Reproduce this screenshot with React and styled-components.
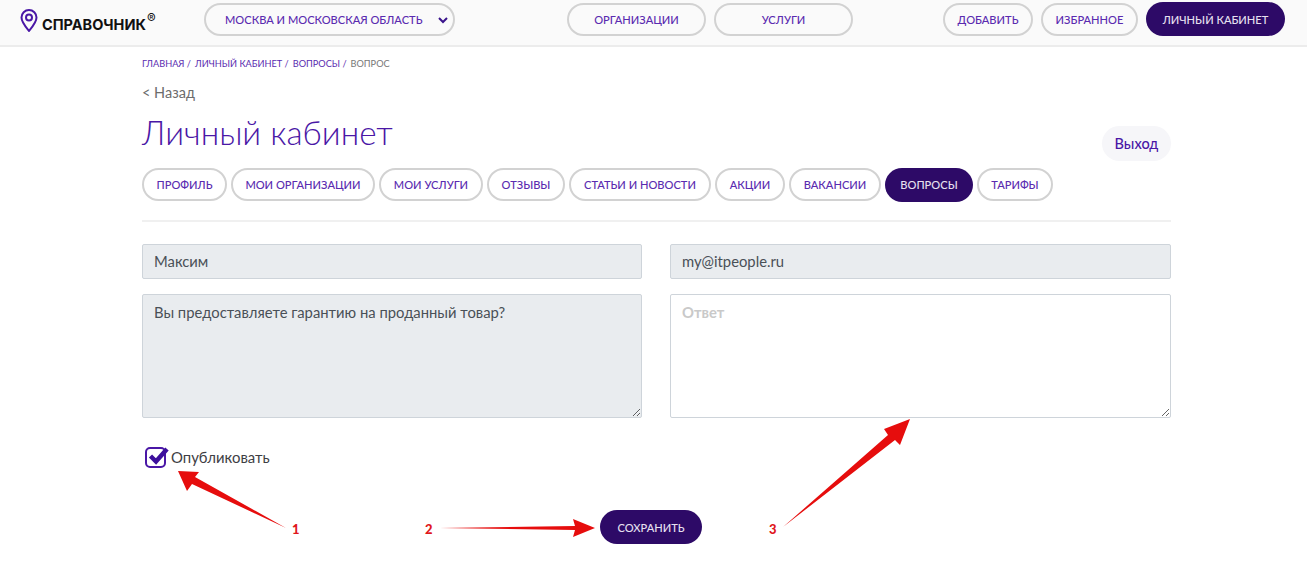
import React from 'react';
import styled, { createGlobalStyle } from 'styled-components';

const GlobalStyle = createGlobalStyle`
  html, body {
    margin: 0;
    padding: 0;
    background: #ffffff;
  }
  body {
    font-family: 'Lato', 'Liberation Sans', sans-serif;
    color: #333;
  }
  * {
    box-sizing: border-box;
  }
`;

const Page = styled.div`
  position: relative;
  width: 1307px;
  height: 582px;
  overflow: hidden;
`;

const Header = styled.header`
  display: flex;
  align-items: center;
  height: 47px;
  padding: 0 22px 7px 20px;
  background: #fafafa;
  border-bottom: 2px solid #ececec;
`;

const Logo = styled.div`
  display: flex;
  align-items: center;
  width: 184px;
  gap: 4px;
  margin-top: 2px;
`;

const LogoText = styled.span`
  font-family: 'Inter', sans-serif;
  font-size: 14.5px;
  font-weight: 700;
  letter-spacing: 0;
  color: #111;
  margin-top: 3px;
`;

const Registered = styled.span`
  font-size: 13px;
  font-weight: 400;
  vertical-align: 7px;
  margin-left: 1px;
`;

const Group = styled.div`
  display: flex;
  align-items: center;
  gap: 8px;
  margin-left: ${(p) => p.$offset || 0}px;
`;

const Pill = styled.a`
  display: flex;
  align-items: center;
  justify-content: center;
  flex: none;
  width: ${(p) => p.$width}px;
  height: ${(p) => (p.$dark ? 34 : 33)}px;
  border-radius: 17px;
  border: ${(p) => (p.$dark ? 'none' : '2px solid #d2d2d2')};
  background: ${(p) => (p.$dark ? '#2d0a67' : 'transparent')};
  color: ${(p) => (p.$dark ? '#e6e0f0' : '#5a2bb0')};
  font-size: 11.1px;
  font-weight: 500;
  white-space: nowrap;
`;

const RegionSelect = styled(Pill)`
  position: relative;
  justify-content: flex-start;
  padding-left: 19px;
`;

const Chevron = styled.svg`
  position: absolute;
  right: 5px;
  top: 11px;
  width: 10px;
  height: 8px;
`;

const Container = styled.main`
  width: 1029px;
  margin-left: 142px;
`;

const Breadcrumbs = styled.nav`
  display: flex;
  gap: 4px;
  margin-top: 11px;
  height: 12px;
  line-height: 12px;
  font-size: 9.2px;
  color: #5a2bb0;
`;

const Crumb = styled.span`
  color: ${(p) => (p.$current ? '#777' : '#5a2bb0')};
`;

const Back = styled.div`
  margin-top: 14px;
  font-size: 14.5px;
  line-height: 18px;
  color: #6c6c6c;
`;

const TitleRow = styled.div`
  display: flex;
  justify-content: space-between;
  align-items: flex-end;
  height: 50px;
  margin-top: 8px;
`;

const Title = styled.h1`
  margin: 0 0 6px;
  font-size: 33.3px;
  line-height: 44px;
  font-weight: 300;
  color: #4a17a6;
`;

const LogoutButton = styled.a`
  display: flex;
  align-items: center;
  justify-content: center;
  width: 69px;
  height: 35px;
  margin-bottom: -1px;
  border-radius: 18px;
  background: #f6f6f9;
  color: #4a17a6;
  font-size: 14.5px;
  font-weight: 500;
`;

const Tabs = styled.div`
  display: flex;
  align-items: center;
  gap: 4px;
  height: 35px;
  margin-top: 7px;
  box-sizing: content-box;
  padding-bottom: 18px;
  border-bottom: 2px solid #f0f0f0;
`;

const Form = styled.form`
  display: grid;
  grid-template-columns: 500px 501px;
  column-gap: 28px;
  row-gap: 15px;
  margin-top: 22px;
`;

const Input = styled.div`
  height: 35px;
  padding: 0 11px;
  line-height: 33px;
  font-size: 14.8px;
  color: #495057;
  background: #e9ecef;
  border: 1px solid #ced4da;
  border-radius: 2px;
`;

const TextArea = styled.textarea`
  display: block;
  width: 100%;
  height: 124px;
  padding: 7px 11px;
  font-family: inherit;
  font-size: 14.8px;
  line-height: 20px;
  color: #495057;
  background: ${(p) => (p.disabled ? '#e9ecef' : '#ffffff')};
  border: 1px solid #ced4da;
  border-radius: 2px;
  outline: none;

  &::placeholder {
    color: #c9c9c9;
    font-weight: 700;
  }
`;

const CheckRow = styled.label`
  display: flex;
  align-items: center;
  gap: 1px;
  margin: 27px 0 0 3px;
  font-size: 14.9px;
  color: #3e3e44;
`;

const SaveRow = styled.div`
  display: flex;
  justify-content: center;
  padding-right: 11px;
  margin-top: 42px;
`;

const Overlay = styled.svg`
  position: absolute;
  left: 0;
  top: 0;
  width: 1307px;
  height: 582px;
  pointer-events: none;
`;

const Mark = styled.span`
  position: absolute;
  left: ${(p) => p.$x}px;
  top: 521px;
  font-size: 13px;
  line-height: 16px;
  font-weight: 900;
  color: #e0161c;
`;

const tabs = [
  { label: 'ПРОФИЛЬ', width: 85 },
  { label: 'МОИ ОРГАНИЗАЦИИ', width: 144 },
  { label: 'МОИ УСЛУГИ', width: 104 },
  { label: 'ОТЗЫВЫ', width: 78 },
  { label: 'СТАТЬИ И НОВОСТИ', width: 142 },
  { label: 'АКЦИИ', width: 70 },
  { label: 'ВАКАНСИИ', width: 92 },
  { label: 'ВОПРОСЫ', width: 88, active: true },
  { label: 'ТАРИФЫ', width: 76 },
];

const App = () => {
  return (
    <Page>
      <GlobalStyle />
      <Header>
        <Logo>
          <svg width="18" height="23" viewBox="0 0 18 23" fill="none" stroke="#4a17a6" strokeWidth="2">
            <path d="M9 22C5 17 1.500 13 1.500 8.500a7.500 7.500 0 0 1 15 0C16.500 13 13 17 9 22z" />
            <circle cx="9" cy="8.500" r="3" />
          </svg>
          <LogoText>
            СПРАВОЧНИК<Registered>®</Registered>
          </LogoText>
        </Logo>
        <RegionSelect $width={251}>
          МОСКВА И МОСКОВСКАЯ ОБЛАСТЬ
          <Chevron viewBox="0 0 10 8" fill="none" stroke="#3a148c" strokeWidth="2">
            <path d="M1 2l4 4 4-4" />
          </Chevron>
        </RegionSelect>
        <Group $offset={112}>
          <Pill $width={139}>ОРГАНИЗАЦИИ</Pill>
          <Pill $width={139}>УСЛУГИ</Pill>
        </Group>
        <Group $offset={90}>
          <Pill $width={90}>ДОБАВИТЬ</Pill>
          <Pill $width={97}>ИЗБРАННОЕ</Pill>
          <Pill $dark $width={139}>ЛИЧНЫЙ КАБИНЕТ</Pill>
        </Group>
      </Header>

      <Container>
        <Breadcrumbs>
          <Crumb>ГЛАВНАЯ /</Crumb>
          <Crumb>ЛИЧНЫЙ КАБИНЕТ /</Crumb>
          <Crumb>ВОПРОСЫ /</Crumb>
          <Crumb $current>ВОПРОС</Crumb>
        </Breadcrumbs>
        <Back>&lt; Назад</Back>
        <TitleRow>
          <Title>Личный кабинет</Title>
          <LogoutButton>Выход</LogoutButton>
        </TitleRow>
        <Tabs>
          {tabs.map((tab) => (
            <Pill key={tab.label} $width={tab.width} $dark={tab.active}>{tab.label}</Pill>
          ))}
        </Tabs>
        <Form>
          <Input>Максим</Input>
          <Input>my@itpeople.ru</Input>
          <TextArea disabled defaultValue="Вы предоставляете гарантию на проданный товар?" />
          <TextArea placeholder="Ответ" />
        </Form>
        <CheckRow>
          <svg width="25" height="23" viewBox="0 0 25 23" fill="none">
            <rect x="1" y="3" width="19" height="19" rx="4" stroke="#4a17a6" strokeWidth="2" />
            <path d="M5.500 11l5.500 5.500 11-12.500" stroke="#3c0f9c" strokeWidth="4.500" />
          </svg>
          Опубликовать
        </CheckRow>
        <SaveRow>
          <Pill $dark $width={102}>СОХРАНИТЬ</Pill>
        </SaveRow>
      </Container>

      <Overlay viewBox="0 0 1307 582">
        <g fill="#e60d0d">
          <path d="M178 471l21 1-4 5 91 51-94-44-5 7z" />
          <path d="M440 528l135-2-2-7 22 9-22 9 2-7z" />
          <path d="M783 527l105-92-4-6 26-10-10 26-5-5z" />
        </g>
      </Overlay>
      <Mark $x={292}>1</Mark>
      <Mark $x={425}>2</Mark>
      <Mark $x={769}>3</Mark>
    </Page>
  );
};

export default App;
